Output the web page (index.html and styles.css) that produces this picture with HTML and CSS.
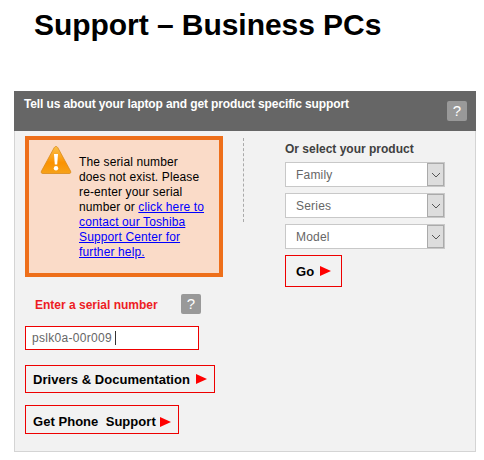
FILE: index.html
```html
<!DOCTYPE html>
<html lang="en">
<head>
<meta charset="utf-8">
<title>Support – Business PCs</title>
<link rel="stylesheet" href="styles.css">
</head>
<body>
<h1 class="title">Support – Business PCs</h1>
<section class="panel">
  <header class="panel-head">
    <h2 class="panel-title">Tell us about your laptop and get product specific support</h2>
    <span class="help help-head">?</span>
  </header>
  <div class="panel-body">
    <div class="col-left">
      <div class="alert">
        <svg class="alert-icon" width="32" height="30" viewBox="0 0 32 30">
          <defs>
            <linearGradient id="warn" x1="0" y1="0" x2="0" y2="1">
              <stop offset="0" stop-color="#fbc04a"/>
              <stop offset="0.6" stop-color="#fb9200"/>
              <stop offset="1" stop-color="#f6a21a"/>
            </linearGradient>
          </defs>
          <path d="M16 1.5 C15 1.5 14.500 2.200 14 3 L1.500 26 C0.800 27.500 1.200 28.500 3 28.500 L29 28.500 C30.800 28.500 31.200 27.500 30.500 26 L18 3 C17.500 2.200 17 1.500 16 1.500 Z" fill="url(#warn)" stroke="#d98a1c" stroke-width="0.800"/>
          <path d="M14 9 L18 9 L17.200 19.500 L14.800 19.500 Z" fill="#fff"/>
          <circle cx="16" cy="23.200" r="2.200" fill="#fff"/>
        </svg>
        <p class="alert-text">The serial number does not exist. Please re-enter your serial number or <a href="#">click here to contact our Toshiba Support Center for further help.</a></p>
      </div>
      <div class="serial-row">
        <label class="serial-label">Enter a serial number</label>
        <span class="help">?</span>
      </div>
      <div class="serial-input"><span>pslk0a-00r009</span><i class="caret"></i></div>
      <a class="btn btn-drivers" href="#">Drivers &amp; Documentation<i class="arrow"></i></a>
      <a class="btn btn-phone" href="#">Get Phone&nbsp; Support<i class="arrow arrow-tight"></i></a>
    </div>
    <div class="divider"></div>
    <div class="col-right">
      <h3 class="select-title">Or select your product</h3>
      <div class="select"><span class="select-value">Family</span><span class="select-btn"><svg width="10" height="6" viewBox="0 0 10 6"><path d="M1 1 L5 5 L9 1" fill="none" stroke="#555" stroke-width="1"/></svg></span></div>
      <div class="select"><span class="select-value">Series</span><span class="select-btn"><svg width="10" height="6" viewBox="0 0 10 6"><path d="M1 1 L5 5 L9 1" fill="none" stroke="#555" stroke-width="1"/></svg></span></div>
      <div class="select"><span class="select-value">Model</span><span class="select-btn"><svg width="10" height="6" viewBox="0 0 10 6"><path d="M1 1 L5 5 L9 1" fill="none" stroke="#555" stroke-width="1"/></svg></span></div>
      <a class="btn btn-go" href="#">Go<i class="arrow"></i></a>
    </div>
  </div>
</section>
</body>
</html>
```
FILE: styles.css
```css
* { box-sizing: border-box; }
html, body { margin: 0; padding: 0; background: #fff; }
body {
  width: 484px;
  height: 460px;
  overflow: hidden;
  padding: 8px 8px 0 14px;
  font-family: "Liberation Sans", Arial, sans-serif;
  color: #000;
}
.title {
  margin: 0 0 50px 20px;
  font-size: 30px;
  line-height: 33px;
  font-weight: bold;
  letter-spacing: -0.05px;
}
.panel { width: 462px; }
.panel-head {
  height: 40px;
  background: #666;
  display: flex;
  justify-content: space-between;
  padding: 6px 9px 0 10px;
}
.panel-title {
  margin: 0;
  font-size: 12px;
  line-height: 14px;
  font-weight: bold;
  color: #fff;
  letter-spacing: -0.12px;
}
.help {
  width: 20px;
  height: 20px;
  background: #999;
  color: #fff;
  border-radius: 2px;
  font-size: 15px;
  line-height: 20px;
  text-align: center;
  display: block;
}
.help-head { margin-top: 4px; }
.panel-body {
  height: 321px;
  background: #f2f2f2;
  border: 1px solid #d4d4d4;
  border-top: 0;
  display: flex;
}
.col-left {
  width: 228px;
  padding: 5px 0 0 10px;
  flex: none;
}
.alert {
  width: 198px;
  height: 141px;
  border: 4px solid #ee6f1a;
  background: #fadbc8;
  display: flex;
  padding: 5px 0 0 11px;
}
.alert-icon { flex: none; margin-right: 7px; }
.alert-text {
  margin: 10px 0 0;
  width: 128px;
  font-size: 12px;
  line-height: 15px;
  letter-spacing: 0.13px;
}
.alert-text a { color: #00f; }
.serial-row {
  display: flex;
  align-items: center;
  margin-top: 17px;
  padding-left: 10px;
  height: 20px;
}
.serial-label {
  width: 146px;
  padding-top: 2px;
  color: #ed1c24;
  font-size: 12px;
  font-weight: bold;
}
.serial-input {
  margin-top: 12px;
  width: 174px;
  height: 24px;
  background: #fff;
  border: 1px solid #e00;
  padding-left: 6px;
  display: flex;
  align-items: center;
  font-size: 12px;
  color: #666;
  letter-spacing: 0.3px;
}
.caret {
  width: 1px;
  height: 14px;
  background: #333;
  margin-left: 3px;
}
.btn {
  display: flex;
  align-items: center;
  width: max-content;
  border: 1px solid #e00;
  color: #000;
  font-size: 13px;
  font-weight: bold;
  text-decoration: none;
  letter-spacing: 0.04px;
}
.btn-drivers { margin-top: 15px; height: 28px; padding: 0 7px; }
.btn-phone { margin-top: 12px; height: 29px; padding: 4px 7px 0; }
.btn-go { margin-top: 6px; height: 32px; padding: 0 10px; }
.arrow {
  width: 0;
  height: 0;
  margin-left: 6px;
  border-left: 11px solid #f00;
  border-top: 5.5px solid transparent;
  border-bottom: 5.5px solid transparent;
}
.arrow-tight { margin-left: 4px; }
.divider {
  width: 0;
  height: 84px;
  margin-top: 7px;
  border-left: 1px dashed #aaa;
  flex: none;
}
.col-right { padding: 10px 0 0 41px; flex: none; }
.select-title {
  margin: 0 0 5px;
  font-size: 12px;
  line-height: 16px;
  font-weight: bold;
  color: #404040;
}
.select {
  width: 160px;
  height: 25px;
  margin-bottom: 6px;
  background: #fff;
  border: 1px solid #c8c8c8;
  display: flex;
}
.select-value {
  flex: 1;
  padding: 1px 0 0 10px;
  font-size: 12px;
  line-height: 23px;
  color: #666;
  letter-spacing: 0.2px;
}
.select-btn {
  width: 17px;
  background: #ddd;
  border: 1px solid #aaa;
  display: flex;
  align-items: center;
  justify-content: center;
}
```
